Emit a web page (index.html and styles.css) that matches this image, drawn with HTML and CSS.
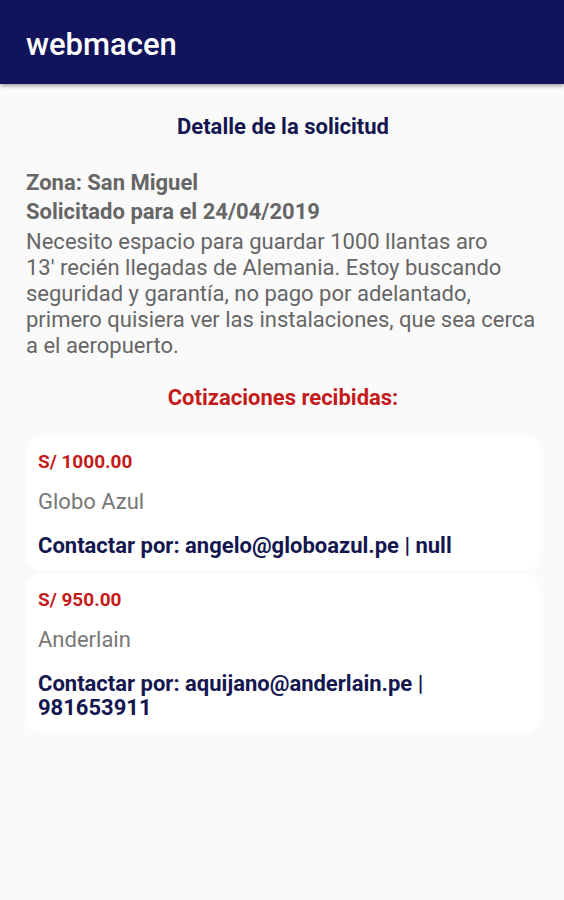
FILE: index.html
```html
<!DOCTYPE html>
<html lang="es">
<head>
    <meta charset="UTF-8">
    <meta name="viewport" content="width=device-width, initial-scale=1.0">
    <title>webmacen</title>
    <link rel="stylesheet" href="styles.css">
</head>
<body>
    <header class="toolbar">
        <h1>webmacen</h1>
    </header>

    <main class="content">
        <h2 class="section-title">Detalle de la solicitud</h2>

        <div class="request">
            <p class="request-label">Zona: San Miguel</p>
            <p class="request-label">Solicitado para el 24/04/2019</p>
            <p class="request-text">Necesito espacio para guardar 1000 llantas aro<br>13' recién llegadas de Alemania. Estoy buscando<br>seguridad y garantía, no pago por adelantado,<br>primero quisiera ver las instalaciones, que sea cerca<br>a el aeropuerto.</p>
        </div>

        <h2 class="quotes-title">Cotizaciones recibidas:</h2>

        <div class="quote">
            <p class="quote-price">S/ 1000.00</p>
            <p class="quote-company">Globo Azul</p>
            <p class="quote-contact">Contactar por: angelo@globoazul.pe | null</p>
        </div>

        <div class="quote">
            <p class="quote-price">S/ 950.00</p>
            <p class="quote-company">Anderlain</p>
            <p class="quote-contact">Contactar por: aquijano@anderlain.pe | 981653911</p>
        </div>
    </main>
</body>
</html>
```

FILE: styles.css
```css
body {
    margin: 0;
    background-color: #fafafa;
    font-family: Roboto, "Noto Sans", Arial, sans-serif;
}
p, h1, h2 {
    margin: 0;
}
.toolbar {
    height: 84px;
    background-color: #11145a;
    box-shadow: 0 2px 4px rgba(0, 0, 0, 0.35);
    display: flex;
    align-items: center;
    padding: 0 26px;
}
.toolbar h1 {
    color: #fff;
    font-size: 31px;
    font-weight: 500;
    line-height: 36px;
    padding-top: 6px;
}
.content {
    padding: 29px 24px 20px 26px;
}
.section-title {
    text-align: center;
    color: #14164f;
    font-size: 22px;
    font-weight: 700;
    line-height: 28px;
}
.request {
    margin-top: 27px;
    color: #666;
}
.request-label {
    font-size: 22px;
    font-weight: 700;
    line-height: 29px;
}
.request-text {
    font-size: 22px;
    line-height: 26px;
    margin-top: 3px;
    white-space: nowrap;
}
.quotes-title {
    text-align: center;
    color: #c41a1a;
    font-size: 22px;
    font-weight: 700;
    line-height: 28px;
    margin-top: 25px;
}
.quote {
    background-color: #fff;
    border-radius: 16px;
    padding: 14px 12px 13px;
    margin-bottom: 3px;
}
.quotes-title + .quote {
    margin-top: 24px;
}
.quote-price {
    color: #c41a1a;
    font-size: 19px;
    font-weight: 700;
    line-height: 24px;
}
.quote-company {
    color: #777;
    font-size: 22px;
    line-height: 28px;
    margin-top: 14px;
}
.quote-contact {
    color: #14164f;
    font-size: 22px;
    font-weight: 700;
    line-height: 24px;
    margin-top: 18px;
    padding-right: 40px;
}
```
